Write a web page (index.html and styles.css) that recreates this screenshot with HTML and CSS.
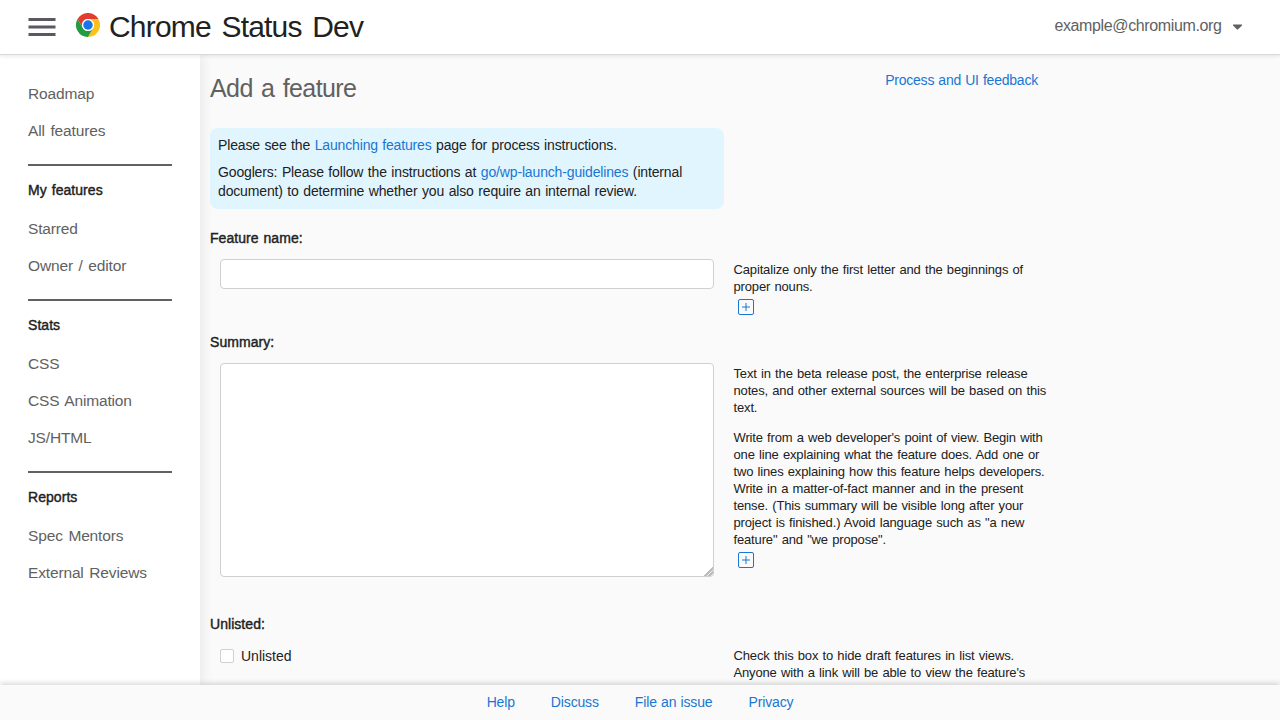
FILE: index.html
```html
<!DOCTYPE html>
<html lang="en">
<head>
<meta charset="utf-8">
<title>Add a feature - Chrome Status Dev</title>
<link rel="stylesheet" href="styles.css">
</head>
<body>
<div class="app">
  <header class="header">
    <svg class="menu" viewBox="0 0 24 24"><path d="M3 18h18v-2H3v2zm0-5h18v-2H3v2zm0-7v2h18V6H3z"/></svg>
    <svg class="logo" viewBox="0 0 48 48">
      <circle cx="24" cy="24" r="24" fill="#fff"/>
      <path fill="#e33b2e" d="M3.2 12A24 24 0 0 1 44.8 12H24A12 12 0 0 0 13.6 30z"/>
      <path fill="#fcc21b" d="M44.8 12A24 24 0 0 1 24 48L34.4 30A12 12 0 0 0 24 12z"/>
      <path fill="#249a41" d="M24 48A24 24 0 0 1 3.2 12L13.6 30A12 12 0 0 0 34.4 30z"/>
      <circle cx="24" cy="24" r="12" fill="#fff"/>
      <circle cx="24" cy="24" r="9.5" fill="#1a73e8"/>
    </svg>
    <h1 class="brand">Chrome Status Dev</h1>
    <div class="account"><span>example@chromium.org</span><svg class="caret" viewBox="0 0 9 6"><path d="M0 0.5h9v1L4.9 5.6h-.8L0 1.500z"/></svg></div>
  </header>
  <div class="body">
    <nav class="sidebar">
      <a>Roadmap</a><a>All features</a>
      <hr><h3>My features</h3>
      <a>Starred</a><a>Owner / editor</a>
      <hr><h3>Stats</h3>
      <a>CSS</a><a>CSS Animation</a><a>JS/HTML</a>
      <hr><h3>Reports</h3>
      <a>Spec Mentors</a><a>External Reviews</a>
    </nav>
    <main class="main">
      <div class="titlebar"><h2>Add a feature</h2><a class="link">Process and UI feedback</a></div>
      <div class="info">
        <p>Please see the <a class="link">Launching features</a> page for process instructions.</p>
        <p>Googlers: Please follow the instructions at <a class="link">go/wp-launch-guidelines</a> (internal<br>document) to determine whether you also require an internal review.</p>
      </div>
      <section class="field name">
        <h4>Feature name:</h4>
        <div class="cols">
          <input class="text" type="text">
          <div class="help"><p>Capitalize only the first letter and the beginnings of<br>proper nouns.</p>
          <svg class="plus" viewBox="0 0 16 16"><rect x=".5" y=".5" width="15" height="15" rx="1.5"/><path d="M8 4v8M4 8h8"/></svg></div>
        </div>
      </section>
      <section class="field summary">
        <h4>Summary:</h4>
        <div class="cols">
          <textarea class="text area"></textarea>
          <div class="help"><p>Text in the beta release post, the enterprise release<br>notes, and other external sources will be based on this<br>text.</p>
          <p>Write from a web developer's point of view. Begin with<br>one line explaining what the feature does. Add one or<br>two lines explaining how this feature helps developers.<br>Write in a matter-of-fact manner and in the present<br>tense. (This summary will be visible long after your<br>project is finished.) Avoid language such as "a new<br>feature" and "we propose".</p>
          <svg class="plus" viewBox="0 0 16 16"><rect x=".5" y=".5" width="15" height="15" rx="1.5"/><path d="M8 4v8M4 8h8"/></svg></div>
        </div>
      </section>
      <section class="field unlisted">
        <h4>Unlisted:</h4>
        <div class="cols">
          <label class="check"><span class="box"></span>Unlisted</label>
          <div class="help"><p>Check this box to hide draft features in list views.<br>Anyone with a link will be able to view the feature's</p></div>
        </div>
      </section>
    </main>
  </div>
  <footer class="footer"><a class="link">Help</a><a class="link">Discuss</a><a class="link">File an issue</a><a class="link">Privacy</a></footer>
</div>
</body>
</html>
```
FILE: styles.css
```css
* { box-sizing: border-box; }
body { margin: 0; font-family: "Liberation Sans", Arial, sans-serif; color: #212121; background: #fafafa; overflow: hidden; }
h1, h2, h3, h4, p { margin: 0; }
.app { display: flex; flex-direction: column; height: 720px; }
.header { position: relative; z-index: 2; flex: none; display: flex; align-items: center; height: 55px; padding: 0 38.500px 1px 24px; background: #fff; border-bottom: 1px solid #d9d9d9; box-shadow: 0 1px 4px rgba(0,0,0,.1); }
.menu { width: 36px; height: 36px; fill: #5b5860; }
.logo { width: 24px; height: 24px; margin: 0 9px 4px 16px; }
.brand { font-size: 30px; font-weight: 400; line-height: 40px; word-spacing: 3px; letter-spacing: -.8px; }
.account { display: flex; align-items: center; gap: 11px; margin-left: auto; color: #616161; font-size: 16px; letter-spacing: -.37px; line-height: 20px; padding-bottom: 2px; }
.caret { width: 9px; height: 6px; margin-top: 3px; fill: #616161; }
.body { flex: 1; display: flex; min-height: 0; }
.sidebar { position: relative; z-index: 1; flex: none; width: 200px; padding: 20px 28px 0; background: #fff; box-shadow: 2px 0 12px rgba(0,0,0,.08); color: #616161; font-size: 15.5px; letter-spacing: -.15px; word-spacing: 1.5px; }
.sidebar a { display: block; height: 37px; line-height: 38px; }
.sidebar hr { height: 2px; margin: 15px 0 14px; border: 0; background: #616161; }
.sidebar h3 { margin-bottom: 10px; height: 20px; line-height: 21px; color: #212121; }
.sidebar h3, .field h4 { font-size: 14px; font-weight: 400; letter-spacing: .05px; word-spacing: 1px; -webkit-text-stroke: .4px #212121; }
.main { flex: none; width: 838px; padding: 13px 0 0 10px; height: 100%; overflow: visible; }
.titlebar { display: flex; justify-content: space-between; height: 60px; font-size: 14px; letter-spacing: -.22px; }
.titlebar h2 { font-size: 25px; font-weight: 400; line-height: 40px; letter-spacing: -.6px; color: #616161; word-spacing: 2px; }
.titlebar a { line-height: 24px; }
.link { color: #1976d2; word-spacing: .5px; }
.info { width: 514px; height: 81px; padding: 8px; border-radius: 8px; background: #e1f5fe; font-size: 14px; line-height: 19px; letter-spacing: -.15px; word-spacing: .8px; white-space: nowrap; }
.info p + p { margin-top: 8px; }
.field { padding-top: 20px; }
.field h4 { height: 20px; line-height: 18px; }
.cols { display: grid; grid-template-columns: 494px 330px; column-gap: 19.500px; margin: 10px 0 0 10px; align-items: start; }
.text { display: block; width: 494px; height: 30px; padding: 0; border: 1px solid #d0d0d0; border-radius: 4px; background: #fff; }
.area { height: 214px; resize: both; }
.area::-webkit-resizer { background: linear-gradient(135deg, transparent 70%, #bbb 70% 77%, #eee 77% 83%, #bbb 83% 92%, transparent 92%); }
.help { padding-top: 2px; font-size: 13px; line-height: 17px; letter-spacing: -.15px; word-spacing: .8px; white-space: nowrap; }
.help p + p { margin-top: 13px; }
.plus { display: block; width: 16px; height: 16px; margin: 4px 0 0 4.500px; fill: none; stroke: #1976d2; }
.name { height: 124px; }
.summary { padding-top: 0; height: 262px; }
.unlisted .cols { margin-top: 9px; }
.unlisted .help { padding-top: 3px; }
.check { display: flex; align-items: center; gap: 7px; height: 14px; margin-top: 5px; font-size: 14px; }
.box { width: 14px; height: 14px; border: 1px solid #d0d0d0; border-radius: 2px; background: #fff; }
.footer { position: relative; z-index: 3; flex: none; display: flex; justify-content: center; gap: 36px; height: 35px; line-height: 35px; font-size: 14px; letter-spacing: -.15px; background: #fafafa; box-shadow: 0 -2px 5px rgba(0,0,0,.15); }
```
